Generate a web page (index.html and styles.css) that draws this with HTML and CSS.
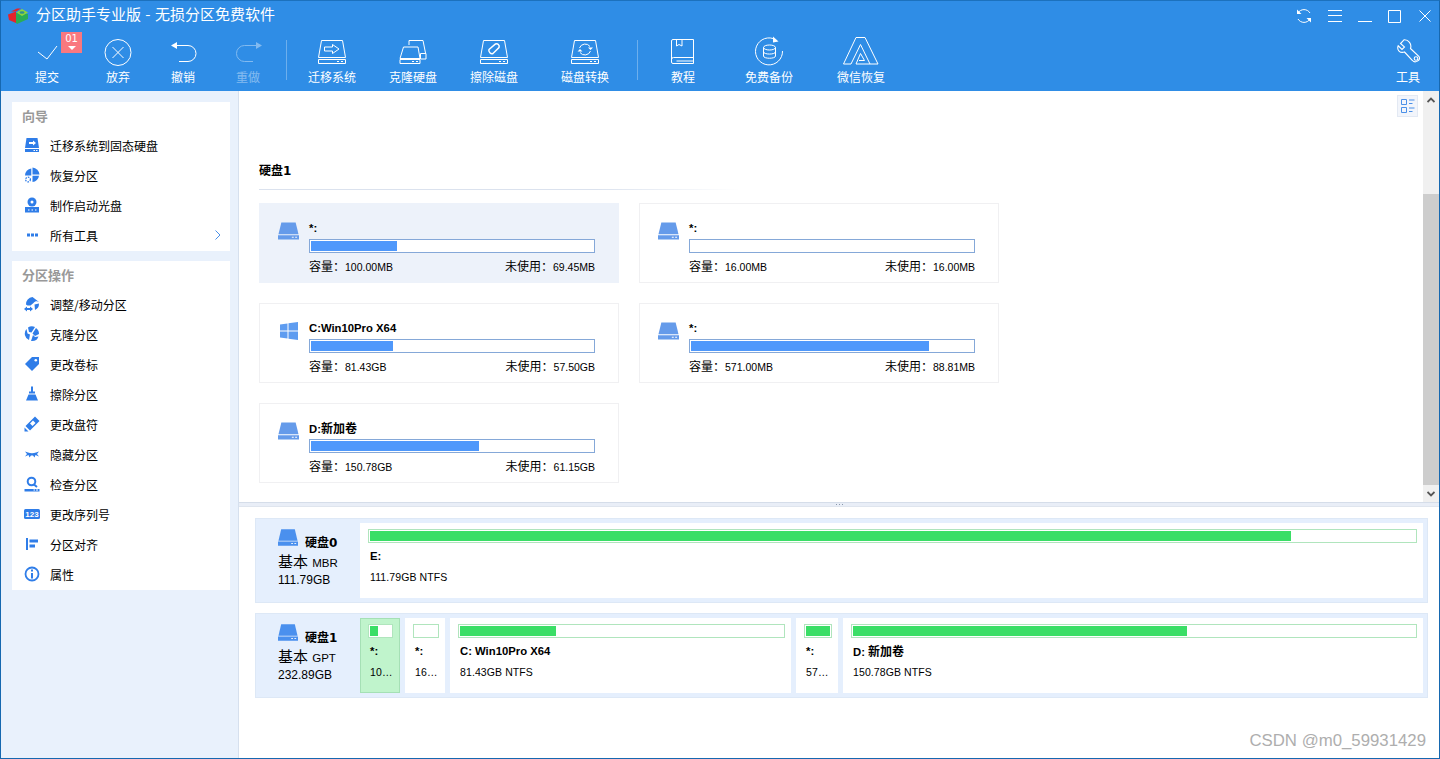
FILE: index.html
```html
<!DOCTYPE html>
<html lang="zh-CN">
<head>
<meta charset="utf-8">
<title>分区助手专业版</title>
<link rel="stylesheet" href="styles.css">
</head>
<body>
<svg class="defs" width="0" height="0" aria-hidden="true">
  <symbol id="drive" viewBox="0 0 22 18">
    <path d="M3.500 0H18.500L21.500 12.500H0.500Z"/>
    <path d="M0 13.500H22V18H0ZM14.500 15V16.200H16.500V15ZM18 15V16.200H20V15Z" fill-rule="evenodd"/>
  </symbol>
  <symbol id="hollow" viewBox="0 0 28 24" overflow="visible">
    <path d="M3.500 .5H24.500L27.500 17.500H.5ZM.5 19.500H27.500V23.500H.5ZM19 21.500H21M23 21.500H25" fill="none" stroke="#fff" stroke-width="1"/>
  </symbol>
</svg>
<div class="window">
  <header class="header">
    <div class="titlebar">
      <svg class="logo" width="20" height="16" viewBox="0 0 20 16"><path d="M0 6.500L8 3.500V15L1 12Z" fill="#e5242a"/><path d="M3 3.500L9 .5H13L8 3.500Z" fill="#e5242a"/><path d="M8 5L20 6V11L9 16L8 15Z" fill="#2aad55"/><path d="M8.500 4.500L14 1L20 4.500L14 8Z" fill="#8ed63a"/><ellipse cx="14" cy="4.500" rx="2.500" ry="1.300" fill="#2d8f8f"/></svg>
      <span class="title">分区助手专业版 - 无损分区免费软件</span>
      <div class="winctrls">
        <svg width="16" height="16" viewBox="0 0 16 16" fill="none" stroke="#fff"><path d="M2 5A7 7 0 0 1 14 5M14 11A7 7 0 0 1 2 11"/><path d="M1 1.500V6H5.500ZM15 14.500V10H10.500Z" fill="#fff" stroke="none"/></svg>
        <svg width="14" height="12" viewBox="0 0 14 12" stroke="#fff"><path d="M0 .5H14M0 5.500H14M0 11.500H14"/></svg>
        <svg width="14" height="12" viewBox="0 0 14 12" stroke="#fff"><path d="M0 11.500H14"/></svg>
        <svg width="13" height="13" viewBox="0 0 13 13" fill="none" stroke="#fff"><path d="M.5.500H12.500V12.500H.5Z"/></svg>
        <svg class="closeic" width="12" height="12" viewBox="0 0 12 12" stroke="#fff"><path d="M.5.500L11.500 11.500M11.500.500L.5 11.500"/></svg>
      </div>
    </div>
    <nav class="toolbar">
      <div class="tool t-commit">
        <svg class="ti" viewBox="0 0 28 28" fill="none" stroke="#fff"><path d="M5 13L14 20L24 7"/></svg>
        <span>提交</span>
        <div class="badge">01<i></i></div>
      </div>
      <div class="tool t-discard">
        <svg class="ti" viewBox="0 0 28 28" fill="none" stroke="#fff"><circle cx="14" cy="13.500" r="13"/><path d="M8.500 8L19.500 19M19.500 8L8.500 19"/></svg>
        <span>放弃</span>
      </div>
      <div class="tool t-undo">
        <svg class="ti" viewBox="0 0 28 28" fill="none" stroke="#fff"><path d="M8 6.500H19A8 8 0 0 1 19 22.500H10"/><path d="M2 6.500L8 3V10Z" fill="#fff" stroke="none"/></svg>
        <span>撤销</span>
      </div>
      <div class="tool t-redo dim">
        <svg class="ti" viewBox="0 0 28 28" fill="none" stroke="#fff"><path d="M22 6.500H10.500A8 8 0 0 0 10.500 22.500H19"/><path d="M28 6.500L22 3V10Z" fill="#fff" stroke="none"/></svg>
        <span>重做</span>
      </div>
      <div class="sep s1"></div>
      <div class="tool t-migrate">
        <svg class="ti" viewBox="0 -1 28 28"><use href="#hollow" width="28" height="24"/><path d="M6.500 7H14.500V4.500L21 9L14.500 13.500V11H6.500Z" fill="none" stroke="#fff"/></svg>
        <span>迁移系统</span>
      </div>
      <div class="tool t-clone">
        <svg class="ti" viewBox="0 -1 28 28" fill="none" stroke="#fff"><path d="M10 5V.5H24L26.500 13"/><path d="M4.500 7H19L21 18.500H1ZM1 19.500H21V23.500H1ZM21.500 13.500H27V19H21.500ZM13 21.500H15M17 21.500H19"/></svg>
        <span>克隆硬盘</span>
      </div>
      <div class="tool t-wipe">
        <svg class="ti" viewBox="0 -1 28 28"><use href="#hollow" width="28" height="24"/><path d="M9 9.500L15.500 4C17.500 3 20 5 19 7.500L13 13.500C11 14.500 8 12 9 9.500Z" fill="none" stroke="#fff" stroke-width="1.500"/></svg>
        <span>擦除磁盘</span>
      </div>
      <div class="tool t-convert">
        <svg class="ti" viewBox="0 -1 28 28"><use href="#hollow" width="28" height="24"/><path d="M8.500 8A6 6 0 0 1 19 6.500M19.500 11A6 6 0 0 1 9 12.500" fill="none" stroke="#fff"/><path d="M17 7.500H22L19.500 10ZM6.500 11.500H11.500L9 9Z" fill="#fff"/></svg>
        <span>磁盘转换</span>
      </div>
      <div class="sep s2"></div>
      <div class="tool t-book">
        <svg class="ti" viewBox="0 0 24 28" fill="none" stroke="#fff"><path d="M2 .5H22.500V24.500H2A1.500 1.500 0 0 1 .5 23V2A1.500 1.500 0 0 1 2 .5ZM.5 20.500A2 2 0 0 1 2.500 18.500H22.500M5.500 22H22.500M5.500 .5V7L8 5.500L11 7V.5"/></svg>
        <span>教程</span>
      </div>
      <div class="tool t-backup">
        <svg class="ti over" viewBox="0 0 30 28" fill="none" stroke="#fff"><path d="M19 -.5A13.500 13.500 0 1 0 28.500 12"/><path d="M19 -2.500V3.500L24.500 2.500Z" fill="#fff" stroke="none"/><ellipse cx="15.500" cy="8.500" rx="6" ry="2.500"/><path d="M9.500 8.500V17C9.500 20 21.500 20 21.500 17V8.500M9.500 12.800C9.500 15.800 21.500 15.800 21.500 12.800"/></svg>
        <span>免费备份</span>
      </div>
      <div class="tool t-wechat">
        <svg class="ti over" viewBox="0 0 36 28" fill="none" stroke="#fff"><path d="M.5 25L13 -1.500H22L35 25H27L17.500 5.500L8 25ZM13 25H27M13 25L17.500 14.500L21.500 21.500H16"/></svg>
        <span>微信恢复</span>
      </div>
      <div class="tool t-tools">
        <svg class="ti" viewBox="-1 0 24 28" fill="none" stroke="#fff" stroke-width="1.100"><path d="M7 .8L3.500 4.500L7.500 8L5 10.500L1.200 6.800C-.5 11 3 14.500 7.500 13L15.500 21.500C18 24.500 24 21.500 22 17.500L13.500 9.500C15 5 11.500 .5 7 .8Z"/><circle cx="19" cy="19.500" r="1.800"/></svg>
        <span>工具</span>
      </div>
    </nav>
  </header>
  <div class="body">
    <aside class="sidebar">
      <section class="panel p-guide">
        <h2>向导</h2>
        <div class="row">
          <svg width="16" height="16" viewBox="0 0 16 16"><path d="M2.500 1H13.500L15 11H1ZM1 12H15V15H1Z" fill="#2f7de8"/><path d="M5 5H9V3.500L12 6L9 8.500V7H5Z" fill="#fff"/><path d="M9.500 13.500H11M12 13.500H13.500" stroke="#fff"/></svg>
          <span>迁移系统到固态硬盘</span>
        </div>
        <div class="row">
          <svg width="16" height="16" viewBox="0 0 16 16"><path d="M8.500 .5V7.500H15.500A7.500 7.500 0 0 0 8.500 .5Z" fill="#2f7de8"/><path d="M7.300 1.500A7 7 0 0 0 1 8.500H7.300ZM8.500 8.700V15A7 7 0 0 0 15 8.700Z" fill="#2f7de8"/><circle cx="4" cy="12.500" r="2.400" fill="none" stroke="#2f7de8" stroke-width="1.300" stroke-dasharray="1.500 1"/></svg>
          <span>恢复分区</span>
        </div>
        <div class="row">
          <svg width="16" height="16" viewBox="0 0 16 16"><circle cx="8" cy="5" r="4.500" fill="#2f7de8"/><circle cx="8" cy="5" r="1.500" fill="#fff"/><path d="M1 10H15V15.500H1Z" fill="#2f7de8"/><path d="M4 13H5.500M7.500 13H9M11 13H12.500" stroke="#fff"/></svg>
          <span>制作启动光盘</span>
        </div>
        <div class="row">
          <svg width="16" height="16" viewBox="0 0 16 16" fill="#2f7de8"><path d="M3 6.500H6V9.500H3ZM7 6.500H10V9.500H7ZM11 6.500H14V9.500H11Z"/></svg>
          <span>所有工具</span>
          <svg class="chev" width="6" height="10" viewBox="0 0 6 10" fill="none" stroke="#4a90e8"><path d="M.5.500L5 5L.5 9.500"/></svg>
        </div>
      </section>
      <section class="panel p-ops">
        <h2>分区操作</h2>
        <div class="row">
          <svg width="16" height="16" viewBox="0 0 16 16" fill="#2f7de8"><path d="M2 8.500A7 7 0 0 1 8.500 1L15 6C13 4.500 11 5 9.500 7L6.500 9.500H3.500Z"/><path d="M10.500 8.500L15 7.500A7 7 0 0 1 11 14ZM0 13L3 10.500V12H6V10.500L9 13L6 15.500V14H3V15.500Z"/></svg>
          <span>调整/移动分区</span>
        </div>
        <div class="row">
          <svg width="16" height="16" viewBox="0 0 16 16" fill="#2f7de8"><path d="M4 1.500A7 7 0 0 1 11 1L7.500 6.500L5 6ZM2.500 3L3.500 7.500L6 8.500L5 14A7 7 0 0 1 2.500 3ZM12 2A7 7 0 0 1 15 8L11 10L8.500 7.500ZM9 9L11 11L14.500 10.500A7 7 0 0 1 7 15Z"/></svg>
          <span>克隆分区</span>
        </div>
        <div class="row">
          <svg width="16" height="16" viewBox="0 0 16 16"><path d="M8 1H15V8L8 15L1 8Z" fill="#2f7de8"/><circle cx="11.800" cy="4.200" r="1.300" fill="#fff"/></svg>
          <span>更改卷标</span>
        </div>
        <div class="row">
          <svg width="16" height="16" viewBox="0 0 16 16" fill="#2f7de8"><path d="M7 .5H9V5.500H11V7.500H5V5.500H7ZM4.500 8.500H11.500L14 14.500H2Z"/></svg>
          <span>擦除分区</span>
        </div>
        <div class="row">
          <svg width="16" height="16" viewBox="0 0 16 16" fill="#2f7de8"><path d="M11 .5L15.500 5L6 14.500L1.500 10ZM.5 11.500L4.500 15.500H.5Z"/><path d="M6 7.500L9 4.500L11.500 7L8.500 10Z" fill="#fff"/></svg>
          <span>更改盘符</span>
        </div>
        <div class="row">
          <svg width="16" height="16" viewBox="0 0 16 16" fill="#2f7de8"><path d="M1 5.500L4 6.500C6.500 7.500 9.500 7.500 12 6.500L15 5.500L13 8L15 10.500L11.500 9L10.500 11.500L9 9.500H7L5.500 11.500L4.500 9L1 10.500L3 8Z"/></svg>
          <span>隐藏分区</span>
        </div>
        <div class="row">
          <svg width="16" height="16" viewBox="0 0 16 16"><circle cx="7.500" cy="5.500" r="3.800" fill="none" stroke="#2f7de8" stroke-width="2"/><path d="M10 8.500L13 11" stroke="#2f7de8" stroke-width="2"/><path d="M.5 13H15.500V15.500H.5Z" fill="#2f7de8"/><path d="M9.500 14H11M12 14H14" stroke="#fff"/></svg>
          <span>检查分区</span>
        </div>
        <div class="row">
          <svg width="16" height="16" viewBox="0 0 16 16"><rect y="3" width="16" height="10" rx="1.500" fill="#2f7de8"/><text class="serial" x="8" y="11">123</text></svg>
          <span>更改序列号</span>
        </div>
        <div class="row">
          <svg width="16" height="16" viewBox="0 0 16 16" fill="#2f7de8"><path d="M2 2H4V14H2ZM5.500 3.500H14V6.500H5.500ZM5.500 8.500H11V11.500H5.500Z"/></svg>
          <span>分区对齐</span>
        </div>
        <div class="row">
          <svg width="16" height="16" viewBox="0 0 16 16"><circle cx="8" cy="8" r="6.500" fill="none" stroke="#2f7de8" stroke-width="1.800"/><path d="M7 3.500H9V5.500H7ZM7 7H9V12.500H7Z" fill="#2f7de8"/></svg>
          <span>属性</span>
        </div>
      </section>
    </aside>
    <main class="main">
      <div class="upper">
        <div class="scrollpane">
          <button class="viewbtn" type="button" aria-label="view">
            <svg width="14" height="16" viewBox="0 0 14 16" fill="none" stroke="#4a90e8"><path d="M.5 1.500H5.500V6.500H.5ZM.5 9.500H5.500V14.500H.5ZM8 2H13.500M8 5.500H11.500M8 10H13.500M8 13.500H11.500"/></svg>
          </button>
          <h3 class="disktitle">硬盘1</h3>
          <div class="grid">
            <article class="card selected">
              <svg class="cardicon"><use href="#drive"/></svg>
              <div class="cardbody">
                <div class="cardname">*:</div>
                <div class="track"><div class="fill" style="width:30.500%"></div></div>
                <div class="meta"><span><span class="cn">容量：</span>100.00MB</span><span><span class="cn">未使用：</span>69.45MB</span></div>
              </div>
            </article>
            <article class="card">
              <svg class="cardicon"><use href="#drive"/></svg>
              <div class="cardbody">
                <div class="cardname">*:</div>
                <div class="track"></div>
                <div class="meta"><span><span class="cn">容量：</span>16.00MB</span><span><span class="cn">未使用：</span>16.00MB</span></div>
              </div>
            </article>
            <article class="card">
              <svg class="cardicon win" viewBox="0 0 18 18"><path d="M0 2.500L7.500 1.500V8.500H0ZM8.500 1.300L18 0V8.500H8.500ZM0 9.500H7.500V16.500L0 15.500ZM8.500 9.500H18V18L8.500 16.700Z"/></svg>
              <div class="cardbody">
                <div class="cardname">C:Win10Pro X64</div>
                <div class="track"><div class="fill" style="width:29.100%"></div></div>
                <div class="meta"><span><span class="cn">容量：</span>81.43GB</span><span><span class="cn">未使用：</span>57.50GB</span></div>
              </div>
            </article>
            <article class="card">
              <svg class="cardicon"><use href="#drive"/></svg>
              <div class="cardbody">
                <div class="cardname">*:</div>
                <div class="track"><div class="fill" style="width:84.400%"></div></div>
                <div class="meta"><span><span class="cn">容量：</span>571.00MB</span><span><span class="cn">未使用：</span>88.81MB</span></div>
              </div>
            </article>
            <article class="card">
              <svg class="cardicon"><use href="#drive"/></svg>
              <div class="cardbody">
                <div class="cardname">D:<span class="cnb">新加卷</span></div>
                <div class="track"><div class="fill" style="width:59.500%"></div></div>
                <div class="meta"><span><span class="cn">容量：</span>150.78GB</span><span><span class="cn">未使用：</span>61.15GB</span></div>
              </div>
            </article>
          </div>
        </div>
        <div class="scrollbar">
          <div class="sb-btn"><svg width="8" height="6" viewBox="0 0 8 6" fill="none" stroke="#555" stroke-width="1.800"><path d="M.5 5L4 1.500L7.500 5"/></svg></div>
          <div class="sb-track"><div class="sb-thumb"></div></div>
          <div class="sb-btn"><svg width="8" height="6" viewBox="0 0 8 6" fill="none" stroke="#555" stroke-width="1.800"><path d="M.5 1L4 4.500L7.500 1"/></svg></div>
        </div>
      </div>
      <div class="splitter"><i></i><i></i><i></i></div>
      <div class="lower">
        <div class="disk">
          <div class="diskinfo">
            <div class="diskhead"><svg class="diskicon"><use href="#drive"/></svg><b>硬盘0</b></div>
            <div class="disktype"><span class="big">基本</span> MBR</div>
            <div class="disksize">111.79GB</div>
          </div>
          <div class="parts">
            <div class="part grow"><div class="ptrack"><div class="pfill" style="width:88.100%"></div></div><b>E:</b><p>111.79GB NTFS</p></div>
          </div>
        </div>
        <div class="disk">
          <div class="diskinfo">
            <div class="diskhead"><svg class="diskicon"><use href="#drive"/></svg><b>硬盘1</b></div>
            <div class="disktype"><span class="big">基本</span> GPT</div>
            <div class="disksize">232.89GB</div>
          </div>
          <div class="parts">
            <div class="part tiny sel"><div class="ptrack"><div class="pfill" style="width:36%"></div></div><b>*:</b><p>10…</p></div>
            <div class="part tiny"><div class="ptrack"></div><b>*:</b><p>16…</p></div>
            <div class="part cpart"><div class="ptrack"><div class="pfill" style="width:29.700%"></div></div><b>C: Win10Pro X64</b><p>81.43GB NTFS</p></div>
            <div class="part small"><div class="ptrack"><div class="pfill" style="width:100%"></div></div><b>*:</b><p>57…</p></div>
            <div class="part grow"><div class="ptrack"><div class="pfill" style="width:59.500%"></div></div><b>D: <span class="cnb">新加卷</span></b><p>150.78GB NTFS</p></div>
          </div>
        </div>
        <div class="watermark">CSDN @m0_59931429</div>
      </div>
    </main>
  </div>
</div>
</body>
</html>
```

FILE: styles.css
```css
* { box-sizing: border-box; }
html, body { margin: 0; padding: 0; height: 100%; overflow: hidden; }
body { font-family: "Liberation Sans", "Noto Sans CJK SC", sans-serif; font-size: 12px; color: #000; background: #fff; }
.defs { position: absolute; }
.window { width: 1440px; height: 759px; display: flex; flex-direction: column; border: 1px solid #1668b0; border-top-color: #1c71bd; }

.header { height: 90px; background: #2f8de6; color: #fff; display: flex; flex-direction: column; flex: none; }
.titlebar { height: 28px; display: flex; align-items: center; padding-left: 7px; }
.logo { margin-right: 8px; margin-top: 2px; }
.title { font-size: 15px; font-family: "Noto Sans CJK SC", sans-serif; line-height: 24px; margin-top: -2px; word-spacing: 1px; }
.winctrls { margin-left: auto; display: flex; align-items: center; gap: 16px; padding-right: 8px; margin-top: 2px; }
.closeic { margin-left: 2px; }
.toolbar { flex: 1; display: flex; position: relative; padding-top: 10px; }
.tool { display: flex; flex-direction: column; align-items: center; font-family: "Noto Sans CJK SC", sans-serif; font-size: 12px; position: relative; width: 64px; }
.tool .ti { height: 28px; width: 28px; flex: none; }
.tool .ti.over { overflow: visible; width: 30px; }
.t-wechat .ti.over { width: 36px; }
.t-book .ti, .t-tools .ti { width: 24px; }
.tool span { margin-top: 1px; line-height: 17px; white-space: nowrap; }
.dim { opacity: .4; }
.t-commit { margin-left: 14px; }
.t-discard { margin-left: 7px; }
.t-undo { margin-left: 1px; }
.t-redo { margin-left: 1px; }
.sep { width: 1px; height: 40px; background: rgba(255,255,255,.3); margin-top: 1px; }
.s1 { margin-left: 6px; }
.t-migrate { margin-left: 13px; }
.t-clone { margin-left: 17px; }
.t-wipe { margin-left: 17px; }
.t-convert { margin-left: 27px; }
.s2 { margin-left: 20px; }
.t-book { margin-left: 13px; }
.t-backup { margin-left: 22px; }
.t-wechat { margin-left: 28px; }
.t-tools { margin-left: auto; margin-right: 1px; width: 60px; }
.badge { position: absolute; left: 46px; top: -7px; width: 21px; height: 21px; background: #f9787f; font-size: 10px; text-align: center; line-height: 14px; font-family: "DejaVu Sans", sans-serif; }
.badge i { position: absolute; left: 7px; top: 14px; border: 4px solid transparent; border-top-color: #fff; border-bottom: 0; }

.body { flex: 1; display: flex; min-height: 0; }
.sidebar { width: 238px; flex: none; background: #e9f1fc; border-right: 1px solid #d6e0ee; padding: 11px 8px 0 11px; display: flex; flex-direction: column; gap: 10px; }
.panel { background: #fff; }
.panel h2 { margin: 0; font-size: 13px; font-weight: 700; color: #999; font-family: "Noto Sans CJK SC", sans-serif; padding-left: 10px; height: 29px; line-height: 28px; }
.p-guide { height: 149px; }
.p-guide h2 { height: 28px; }
.p-ops { height: 329px; }
.p-ops h2 { height: 29px; }
.p-ops .row:first-of-type { margin-top: -1px; }
.row { height: 30px; display: flex; align-items: center; padding-left: 12px; font-family: "Noto Sans CJK SC", sans-serif; }
.row > svg:first-child { flex: none; margin-right: 10px; }
.chev { margin-left: auto; margin-right: 9px; }
.serial { font: 700 8px "Liberation Sans", sans-serif; fill: #fff; text-anchor: middle; }

.main { flex: 1; display: flex; flex-direction: column; min-width: 0; }
.upper { height: 411px; display: flex; flex: none; }
.scrollpane { flex: 1; position: relative; padding: 70px 0 0 20px; }
.viewbtn { position: absolute; right: 5px; top: 4px; width: 21px; height: 22px; padding: 0; border: 1px solid #e3e9f3; background: #f2f5fb; display: flex; align-items: center; justify-content: center; }
.disktitle { margin: 0; width: 480px; font-size: 12px; font-family: "DejaVu Sans", "Noto Sans CJK SC", sans-serif; font-weight: 700; height: 29px; line-height: 20px; border-bottom: 1px solid; border-image: linear-gradient(90deg, #dbe2ee 70%, #fff) 1; }
.grid { display: grid; grid-template-columns: 360px 360px; grid-auto-rows: 80px; gap: 20px; margin-top: 13px; }
.card { border: 1px solid #f0f0f2; padding: 16px 23px 0 18px; display: flex; }
.card.selected { background: #edf2fa; border-color: #edf2fa; }
.cardicon { width: 21px; height: 18px; fill: #659bea; flex: none; margin-right: 10px; margin-top: 2px; }
.cardicon.win { fill: #5e9cf0; width: 18px; height: 18px; margin-left: 2px; margin-right: 11px; }
.cardbody { flex: 1; min-width: 0; }
.cardname { font-weight: 700; font-size: 11.3px; height: 19px; line-height: 16px; }
.cnb { font-family: "Noto Sans CJK SC", sans-serif; font-size: 12px; }
.track { height: 14px; border: 1px solid #85a8d8; background: #fff; padding: 1px; }
.fill { height: 100%; background: #4f98fb; }
.meta { display: flex; justify-content: space-between; margin-top: 4px; font-size: 10.5px; line-height: 18px; height: 18px; }
.cn { font-family: "Noto Sans CJK TC", sans-serif; font-size: 12px; }

.splitter { height: 5px; flex: none; background: #e9eef7; border-top: 1px solid #d5dde9; border-bottom: 1px solid #dfe5ee; display: flex; gap: 2px; justify-content: center; align-items: center; }
.splitter i { width: 1px; height: 1px; background: #8a99ad; }
.lower { flex: 1; position: relative; padding: 11px 11px 0 16px; display: flex; flex-direction: column; gap: 10px; }
.disk { height: 85px; border: 1px solid #dde8f6; background: #e5effd; display: flex; padding: 4px; }
.diskinfo { width: 100px; flex: none; padding-left: 18px; }
.diskhead { display: flex; align-items: center; height: 29px; padding-top: 4px; }
.diskicon { width: 20px; height: 17px; fill: #4a90ee; margin-right: 7px; margin-top: -4px; flex: none; }
.diskhead b { font-size: 12px; font-family: "DejaVu Sans", "Noto Sans CJK SC", sans-serif; margin-top: 4px; }
.disktype { font-size: 11.500px; line-height: 16px; height: 16px; margin-top: 1px; }
.big { font-family: "Noto Sans CJK SC", sans-serif; font-size: 15px; line-height: 16px; margin-right: 1px; }
.disksize { font-size: 12px; line-height: 18px; margin-top: 2px; }
.parts { flex: 1; display: flex; gap: 5px; min-width: 0; }
.part { background: #fff; padding: 6px 6px 0 10px; min-width: 0; }
.part.sel { background: #c0f4cc; border: 1px solid #a5e0b5; padding: 5px 6px 0 9px; }
.grow { flex: 1; }
.tiny { width: 40px; }
.cpart { width: 341px; }
.small { width: 42px; }
.ptrack { height: 14px; border: 1px solid #b0e5bd; background: #fff; padding: 1px; margin-left: -2px; }
.pfill { height: 100%; background: #3ade66; }
.part b { display: block; font-size: 11.3px; margin-top: 6px; line-height: 14px; height: 14px; white-space: nowrap; }
.part p { margin: 7px 0 0; font-size: 10.5px; letter-spacing: .1px; line-height: 14px; white-space: nowrap; }
.watermark { position: absolute; right: 13px; bottom: 7px; font-size: 16.800px; color: #aeaeae; font-family: "Liberation Sans", sans-serif; }

.scrollbar { width: 16px; flex: none; background: #f0f0f0; display: flex; flex-direction: column; }
.sb-btn { height: 17px; display: flex; align-items: center; justify-content: center; flex: none; }
.sb-track { flex: 1; padding-top: 86px; display: flex; }
.sb-thumb { flex: 1; background: #cdcdcd; }
```
